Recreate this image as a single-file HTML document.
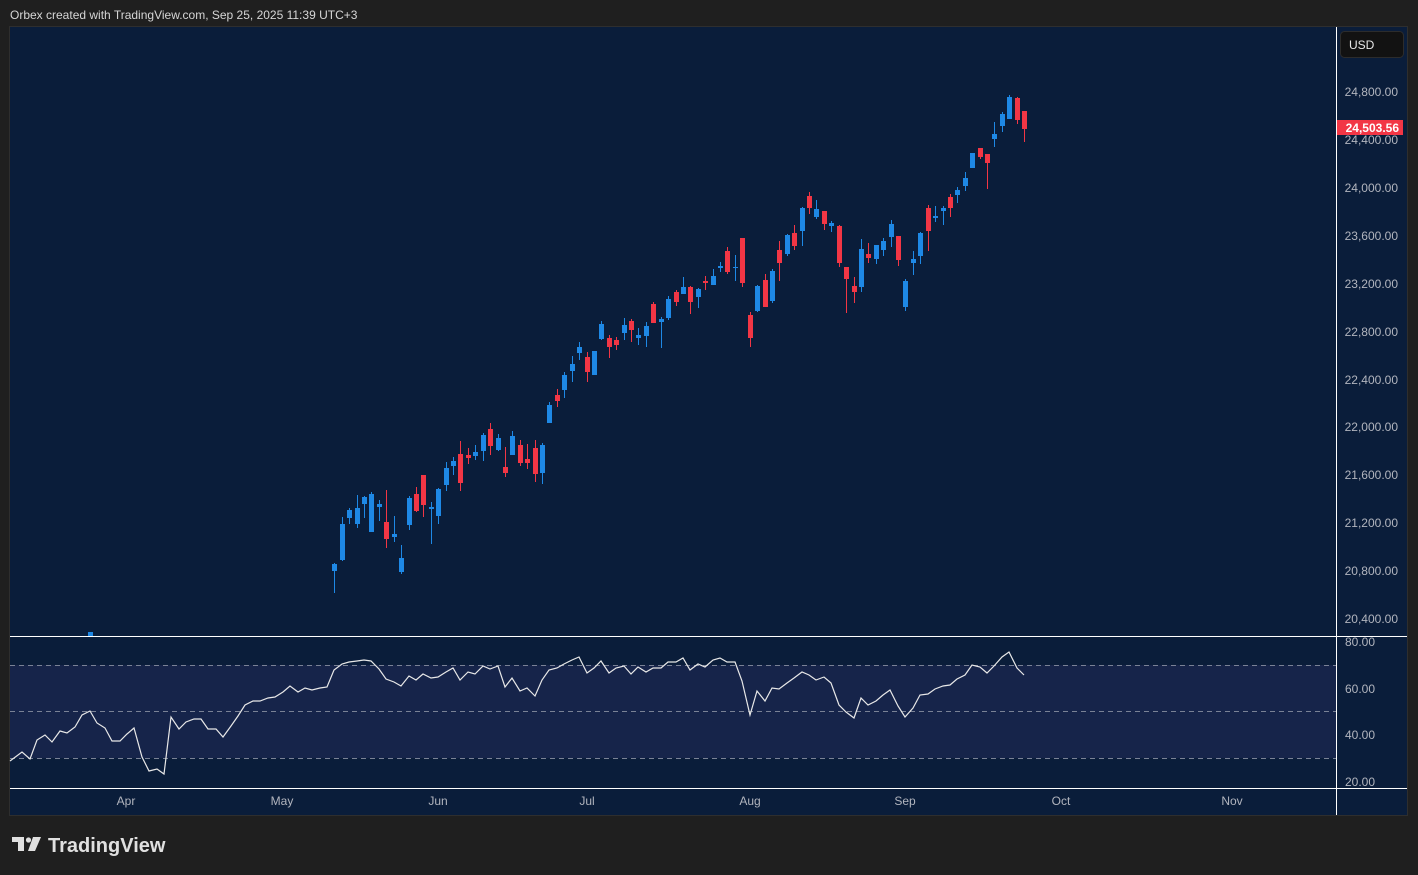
<!DOCTYPE html>
<html><head><meta charset="utf-8"><style>
html,body{margin:0;padding:0;background:#1f1f1f;width:1418px;height:875px;overflow:hidden;font-family:"Liberation Sans",sans-serif}
.hdr{position:absolute;left:10px;top:8px;font-size:12px;color:#d6d6d6}
svg{position:absolute;left:0;top:0}
</style></head><body>
<div class="hdr">Orbex created with TradingView.com, Sep 25, 2025 11:39 UTC+3</div>
<svg id="s" width="1418" height="875" xmlns="http://www.w3.org/2000/svg">
<rect x="9.5" y="26.5" width="1398" height="789" fill="#0a1d3a" stroke="#2e2e2e"/>
<rect x="10" y="665" width="1326" height="93" fill="#16244a"/>
<g stroke="#7a8296" stroke-dasharray="5,4" stroke-width="1">
<line x1="10" y1="665.5" x2="1336" y2="665.5"/><line x1="10" y1="711.5" x2="1336" y2="711.5"/><line x1="10" y1="758.5" x2="1336" y2="758.5"/></g>
<g id="c"></g>
<rect x="88" y="632" width="5" height="4" fill="#1e88e5"/>
<polyline id="r" fill="none" stroke="#e8e8e8" stroke-width="1.2"/>
<line x1="10" y1="636.5" x2="1407" y2="636.5" stroke="#fff"/>
<line x1="10" y1="788.5" x2="1407" y2="788.5" stroke="#fff"/>
<line x1="1336.5" y1="27" x2="1336.5" y2="815" stroke="#fff"/>
<rect x="1340.5" y="31.5" width="63" height="26" rx="4" fill="#121212" stroke="#2c2c2c"/>
<text x="1349" y="49" fill="#e8e8e8" font-size="12">USD</text>
<g fill="#b2b5be" font-size="12" text-anchor="end">
<text x="1398" y="96">24,800.00</text><text x="1398" y="144">24,400.00</text><text x="1398" y="192">24,000.00</text>
<text x="1398" y="240">23,600.00</text><text x="1398" y="288">23,200.00</text><text x="1398" y="336">22,800.00</text>
<text x="1398" y="384">22,400.00</text><text x="1398" y="431">22,000.00</text><text x="1398" y="479">21,600.00</text>
<text x="1398" y="527">21,200.00</text><text x="1398" y="575">20,800.00</text><text x="1398" y="623">20,400.00</text>
</g>
<rect x="1337" y="120" width="66" height="15" fill="#f23645"/>
<text x="1399" y="132" fill="#fff" font-size="12" font-weight="bold" text-anchor="end">24,503.56</text>
<g fill="#b2b5be" font-size="12" text-anchor="end">
<text x="1375" y="646">80.00</text><text x="1375" y="693">60.00</text><text x="1375" y="739">40.00</text><text x="1375" y="786">20.00</text></g>
<g fill="#b2b5be" font-size="12" text-anchor="middle">
<text x="126" y="805">Apr</text><text x="282" y="805">May</text><text x="438" y="805">Jun</text><text x="587" y="805">Jul</text>
<text x="750" y="805">Aug</text><text x="905" y="805">Sep</text><text x="1061" y="805">Oct</text><text x="1232" y="805">Nov</text></g>
<g fill="#e0e0e0">
<path d="M12 837h12v14h-6v-9h-6z"/><circle cx="28.5" cy="840" r="2.6"/><path d="M33 837h8l-6 14h-7z"/>
</g>
<text x="48" y="852" fill="#e0e0e0" font-size="20" font-weight="bold">TradingView</text>
</svg>
<script>
var B='#1e88e5',R='#f23645';
var d=[[334,564,571,563,593,B],[342,524,560,517,561,B],[349,510,518,508,524,B],[357,508,524,495,528,B],[364,497,504,496,518,B],[371,494,532,492,532,B],[379,504,507,500,521,B],[386,522,539,490,548,R],[394,534,537,516,542,B],[401,558,572,545,574,B],[409,498,525,496,530,B],[416,494,511,487,512,R],[423,475,505,475,517,R],[431,507,509,502,544,B],[438,489,516,488,524,B],[446,468,485,462,491,B],[453,461,466,457,475,B],[460,454,483,441,491,R],[468,455,458,448,464,R],[475,452,456,445,460,B],[483,435,451,433,461,B],[490,429,446,423,455,R],[498,438,450,434,451,B],[505,467,473,447,477,R],[512,436,455,431,455,B],[520,445,463,440,466,R],[527,459,463,444,469,R],[535,448,474,440,482,R],[542,445,473,443,484,B],[549,405,423,402,423,B],[557,395,401,389,407,R],[564,375,390,372,398,B],[572,364,371,356,382,B],[579,347,353,342,360,B],[587,357,372,352,382,R],[594,351,375,351,375,B],[601,324,339,321,340,B],[609,338,347,335,358,R],[616,340,345,337,350,R],[624,325,333,318,340,B],[631,321,330,319,342,R],[638,335,338,328,345,B],[646,326,336,322,347,B],[653,304,323,302,323,R],[661,319,322,317,348,B],[668,299,318,296,320,B],[676,292,302,290,306,R],[683,287,294,277,294,B],[690,287,302,286,314,R],[698,289,297,288,308,B],[705,281,283,276,290,R],[713,276,285,269,285,B],[720,266,268,262,272,B],[727,251,272,247,274,R],[735,267,268,255,281,B],[742,238,283,238,287,R],[750,315,338,312,347,R],[757,286,311,285,312,B],[765,280,307,274,307,R],[772,271,301,269,303,B],[779,250,263,241,281,R],[787,235,254,234,256,B],[794,233,246,225,250,R],[802,208,231,207,246,B],[809,196,208,192,214,R],[816,209,217,200,219,B],[824,211,224,211,230,R],[831,223,226,221,232,B],[839,226,263,225,267,R],[846,267,279,267,313,R],[854,286,292,277,303,R],[861,249,287,239,292,B],[868,254,258,243,263,R],[876,245,259,245,264,B],[883,241,250,238,256,B],[891,224,237,220,247,B],[898,236,260,236,266,R],[905,281,307,279,311,B],[913,259,263,251,275,B],[920,233,256,232,264,B],[928,208,231,205,251,R],[935,216,218,206,222,B],[943,208,211,206,225,B],[950,197,208,194,217,R],[957,190,195,187,203,B],[965,178,186,172,191,B],[972,153,168,153,168,B],[980,148,157,148,159,R],[987,154,163,154,189,R],[994,134,139,122,147,B],[1002,114,126,112,132,B],[1009,97,119,95,119,B],[1017,98,120,97,124,R],[1024,111,129,111,142,R]];
var h='';d.forEach(function(c){h+='<line x1="'+(c[0]+.5)+'" y1="'+c[3]+'" x2="'+(c[0]+.5)+'" y2="'+c[4]+'" stroke="'+c[5]+'"/><rect x="'+(c[0]-2)+'" y="'+c[1]+'" width="5" height="'+Math.max(1,c[2]-c[1])+'" fill="'+c[5]+'"/>';});
document.getElementById('c').innerHTML=h;
var p=[10,761,22,752,30,759,37,740,45,735,52,742,60,731,67,733,75,727,82,715,90,711,97,723,105,728,112,741,120,741,127,734,134,728,142,757,149,771,157,769,164,774,171,717,179,729,186,722,194,719,201,719,208,729,216,729,223,737,231,726,238,716,245,705,253,701,260,701,268,698,275,697,283,692,290,686,298,692,305,688,312,690,320,688,327,687,334,670,342,664,349,662,357,661,364,660,371,661,379,669,386,679,394,682,401,686,409,676,416,680,423,674,431,678,438,677,446,672,453,668,460,680,468,672,475,674,483,666,490,669,498,666,505,687,512,678,520,691,527,688,535,696,542,680,549,670,557,668,564,664,572,660,579,657,587,673,594,668,601,661,609,673,616,668,624,666,631,674,638,667,646,672,653,668,661,668,668,662,676,662,683,658,690,670,698,664,705,667,713,660,720,658,727,662,735,662,742,681,750,715,757,691,765,701,772,688,779,689,787,683,794,678,802,672,809,675,816,680,824,677,831,683,839,705,846,712,854,718,861,698,868,705,876,701,883,695,890,690,898,706,905,717,913,708,920,695,928,694,935,689,943,686,950,685,957,679,965,675,972,665,980,667,987,673,994,666,1002,657,1009,652,1017,668,1024,675];
var s='';for(var i=0;i<p.length;i+=2)s+=p[i]+','+p[i+1]+' ';
document.getElementById('r').setAttribute('points',s);
</script>
</body></html>
